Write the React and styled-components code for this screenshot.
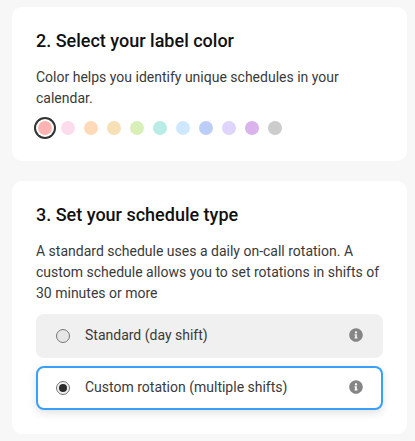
import React from "react";
import styled, { createGlobalStyle } from "styled-components";
import { FaInfoCircle } from "react-icons/fa";

const Global = createGlobalStyle`
  html, body { margin: 0; padding: 0; background: #f7f7f7; }
  * { box-sizing: border-box; }
`;
const Page = styled.div`
  width: 415px; height: 441px; padding: 7px 8px 7px 12px;
  display: flex; flex-direction: column; gap: 20px;
  font-family: Roboto, "Liberation Sans", sans-serif; overflow: hidden;
`;
const Card = styled.section`
  background: #fff; border-radius: 10px; padding: 22px 24px ${p => p.$bottom || 22}px;
  display: flex; flex-direction: column;
`;
const Title = styled.h2`
  margin: 0 0 14px; font-size: 18px; line-height: 24px; font-weight: 500; color: #111;
`;
const Body = styled.p`
  margin: 0; font-size: 14px; line-height: 21px; color: #3a3a3a;
`;
const Dots = styled.div`
  display: flex; align-items: center; gap: 9px; margin: 8px 0 0; padding-left: 2px; height: 22px;
`;
const Dot = styled.span`
  width: 14px; height: 14px; border-radius: 50%; background: ${p => p.$color}; flex: none;
  ${p => p.$selected && "box-shadow: 0 0 0 2px #fff, 0 0 0 4px #333;"}
`;
const Options = styled.div`
  display: flex; flex-direction: column; gap: 8px; margin-top: 10px;
`;
const Option = styled.div`
  height: 44px; border-radius: 8px; display: flex; align-items: center;
  background: ${p => p.$active ? "#fff" : "#f0f0f0"};
  border: ${p => p.$active ? "2px solid #389ffb" : "none"};
  padding: 0 ${p => p.$active ? 18 : 20}px;
  ${p => p.$active && "box-shadow: 0 3px 8px rgba(0,0,0,.12);"}
`;
const Radio = styled.span`
  width: 14px; height: 14px; border-radius: 50%; border: 1px solid #767676; background: ${p => p.$checked ? "#efefef" : "#e6e6e6"};
  flex: none; display: flex; align-items: center; justify-content: center;
  &::after { content: ""; width: 8px; height: 8px; border-radius: 50%; background: ${p => p.$checked ? "#2b2b2b" : "transparent"}; }
`;
const Label = styled.span`
  flex: 1; margin-left: 15px; font-size: 14px; line-height: 20px; color: #3a3a3a; margin-top: -2px;
`;
const Info = styled(FaInfoCircle)`
  width: 14px; height: 14px; color: #858585; flex: none; margin-top: -3px;
`;
const colors = ["#ffb3b3","#fcdcec","#ffd9b8","#f7e0b5","#d8f0b8","#b8ece4","#cfe8ff","#bccdf7","#ded4fc","#d9b3eb","#cccccc"];

export default function App() {
  return (
    <Page>
      <Global />
      <Card>
        <Title>2. Select your label color</Title>
        <Body>Color helps you identify unique schedules in your calendar.</Body>
        <Dots>
          {colors.map((c, i) => <Dot key={c} $color={c} $selected={i === 0} />)}
        </Dots>
      </Card>
      <Card $bottom={24}>
        <Title>3. Set your schedule type</Title>
        <Body>A standard schedule uses a daily on-call rotation. A custom schedule allows you to set rotations in shifts of 30 minutes or more</Body>
        <Options>
          <Option><Radio /><Label>Standard (day shift)</Label><Info /></Option>
          <Option $active><Radio $checked /><Label>Custom rotation (multiple shifts)</Label><Info /></Option>
        </Options>
      </Card>
    </Page>
  );
}
